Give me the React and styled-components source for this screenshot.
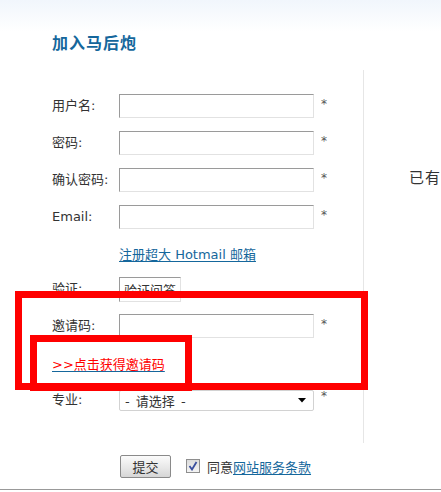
import React from "react";
import styled, { createGlobalStyle } from "styled-components";

const GlobalStyle = createGlobalStyle`
  html, body {
    margin: 0;
    padding: 0;
    background: #fff;
  }
  body {
    font-family: "DejaVu Sans", "Noto Sans CJK SC", sans-serif;
    font-size: 13px;
    color: #333;
  }
`;

const fields = [
  { label: "用户名:", type: "text" },
  { label: "密码:", type: "password" },
  { label: "确认密码:", type: "password" },
  { label: "Email:", type: "text" },
];

const App = () => {
  return (
    <Page>
      <GlobalStyle />
      <Header>
        <Title>加入马后炮</Title>
      </Header>
      <Main>
        <FormCol>
          {fields.map((f) => (
            <Row key={f.label}>
              <Label>{f.label}</Label>
              <TextInput type={f.type} />
              <Star>*</Star>
            </Row>
          ))}
          <Row short>
            <Indent />
            <BlueLink href="#">注册超大 Hotmail 邮箱</BlueLink>
          </Row>
          <Row>
            <Label>验证:</Label>
            <TextInput small defaultValue="验证问答" readOnly />
          </Row>
          <Row>
            <Label>邀请码:</Label>
            <TextInput type="text" />
            <Star>*</Star>
          </Row>
          <Row>
            <BlueLink href="#">
              <RedText>&gt;&gt;点击获得邀请码</RedText>
            </BlueLink>
          </Row>
          <Row>
            <Label>专业:</Label>
            <SelectBox>
              <span>- 请选择 -</span>
              <svg width="8" height="5" viewBox="0 0 8 5">
                <path d="M0 0 L8 0 L4 4.5 Z" fill="#000" />
              </svg>
            </SelectBox>
            <Star up>*</Star>
          </Row>
        </FormCol>
        <SideCol>已有</SideCol>
      </Main>
      <Footer>
        <SubmitButton type="button">提交</SubmitButton>
        <CheckBox>
          <svg width="10" height="10" viewBox="0 0 10 10">
            <path d="M1.5 5 L4 8.5 L8.5 1" fill="none" stroke="#3a4f9e" strokeWidth="1.8" />
          </svg>
        </CheckBox>
        <Agree>
          同意<BlueLink href="#">网站服务条款</BlueLink>
        </Agree>
      </Footer>
      <MarkBox style={{ left: 15, top: 291, width: 353, height: 99 }} />
      <MarkBox style={{ left: 30, top: 335, width: 162, height: 56 }} />
    </Page>
  );
};

const Page = styled.div`
  position: relative;
  width: 441px;
  height: 492px;
  overflow: hidden;
`;

const Header = styled.div`
  height: 70px;
  box-sizing: border-box;
  padding: 31px 0 0 52px;
  background: linear-gradient(#f1f6fc, #fff 32px);
`;

const Title = styled.h1`
  margin: 0;
  font-family: "Noto Sans CJK SC", sans-serif;
  font-size: 16px;
  line-height: 22px;
  font-weight: bold;
  letter-spacing: 1px;
  color: #15679c;
`;

const Main = styled.div`
  display: flex;
`;

const FormCol = styled.div`
  width: 364px;
  flex-shrink: 0;
  box-sizing: border-box;
  padding: 24px 0 31px 52px;
  border-right: 1px solid #e6e6e6;
`;

const SideCol = styled.div`
  flex: 1;
  min-width: 0;
  padding: 97px 0 0 45px;
  font-family: "Noto Sans CJK SC", sans-serif;
  font-size: 15px;
  line-height: 20px;
  letter-spacing: 1px;
  color: #333;
  white-space: nowrap;
`;

const Row = styled.div`
  display: flex;
  align-items: center;
  height: ${(p) => (p.short ? "22px" : "24px")};
  margin-bottom: 13px;
  &:last-child {
    margin-bottom: 0;
  }
`;

const Label = styled.span`
  width: 67px;
  flex-shrink: 0;
  color: #333;
  line-height: 16px;
`;

const Indent = styled.span`
  width: 67px;
  flex-shrink: 0;
`;

const TextInput = styled.input`
  box-sizing: border-box;
  width: ${(p) => (p.small ? "62px" : "195px")};
  height: ${(p) => (p.small ? "25px" : "24px")};
  margin: 0;
  padding: 2px 4px;
  border: 1px solid #e2e2e2;
  border-top-color: #9a9a9a;
  border-left-color: #9a9a9a;
  font-family: "Noto Sans CJK SC", sans-serif;
  font-size: 13px;
  color: #333;
  background: #fff;
  outline: none;
`;

const Star = styled.span`
  margin-left: 7px;
  align-self: flex-start;
  padding-top: ${(p) => (p.up ? "2px" : "4px")};
  font-size: 12px;
  line-height: 12px;
  color: #555;
`;

const BlueLink = styled.a`
  color: #15679c;
  text-decoration: underline;
  text-underline-offset: 2px;
`;

const RedText = styled.span`
  color: #f00;
`;

const SelectBox = styled.div`
  box-sizing: border-box;
  width: 195px;
  height: 21px;
  display: flex;
  align-items: center;
  justify-content: space-between;
  padding: 0 7px 0 5px;
  border: 1px solid #d2d2d2;
  border-radius: 2px;
  font-size: 13px;
  word-spacing: 2px;
  color: #333;
  & > svg {
    margin-top: 1px;
  }
`;

const Footer = styled.div`
  height: 46px;
  display: flex;
  align-items: center;
  padding-left: 120px;
  border-bottom: 1px solid #999;
`;

const SubmitButton = styled.button`
  box-sizing: border-box;
  width: 51px;
  height: 23px;
  margin: 0;
  padding: 0;
  border: 1px solid #8a8a8a;
  border-radius: 2px;
  background: linear-gradient(#fbfbfb, #e6e6e6 60%, #d6d6d6);
  font-family: "Noto Sans CJK SC", sans-serif;
  font-size: 13px;
  color: #333;
`;

const CheckBox = styled.span`
  box-sizing: border-box;
  width: 14px;
  height: 14px;
  margin-left: 15px;
  display: flex;
  align-items: center;
  justify-content: center;
  border: 1px solid #8e8e8e;
  background: linear-gradient(#dcdcdc, #f4f4f4);
`;

const Agree = styled.span`
  margin-left: 7px;
  font-family: "Noto Sans CJK SC", sans-serif;
  font-size: 13px;
  color: #333;
`;

const MarkBox = styled.div`
  position: absolute;
  box-sizing: border-box;
  border: 7px solid #f00;
  pointer-events: none;
`;

export default App;
